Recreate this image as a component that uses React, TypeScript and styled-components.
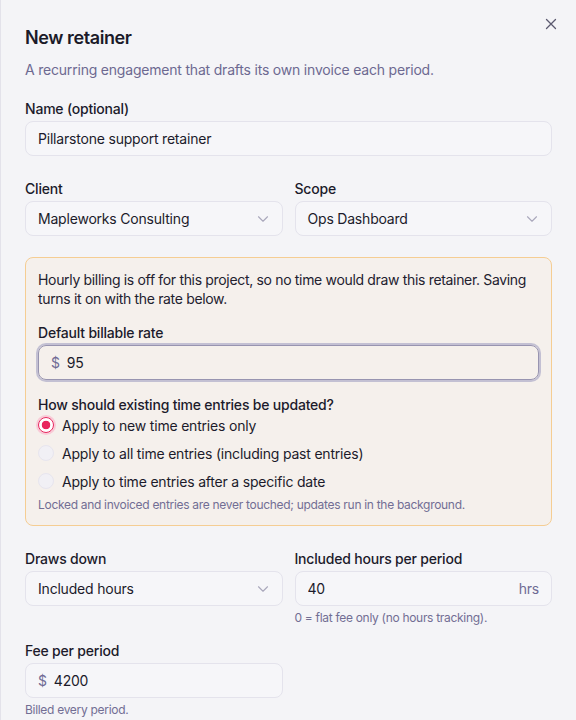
import React from "react";
import styled, { createGlobalStyle } from "styled-components";

const GlobalStyle = createGlobalStyle`
  * { box-sizing: border-box; }
  html, body {
    margin: 0;
    padding: 0;
    background: #f4f4f7;
    font-family: Inter, "Noto Sans", sans-serif;
    color: #1c1b2b;
    letter-spacing: -0.2px;
    -webkit-font-smoothing: antialiased;
  }
`;

const Dialog = styled.div`
  position: relative;
  width: 576px;
  min-height: 720px;
  padding: 24px;
  border-left: 1px solid #e3e2ea;
  background: #f4f4f7;
  overflow: hidden;
`;

const CloseButton = styled.button`
  position: absolute;
  top: 16px;
  right: 17px;
  width: 16px;
  height: 16px;
  padding: 0;
  border: 0;
  background: transparent;
  color: #5b596f;
  display: flex;
  align-items: center;
  justify-content: center;
  cursor: pointer;
`;

const Title = styled.h2`
  margin: 0;
  font-size: 18px;
  line-height: 28px;
  font-weight: 600;
  letter-spacing: -0.4px;
  color: #1b1a29;
`;

const Subtitle = styled.p`
  margin: 8px 0 0;
  font-size: 14px;
  line-height: 20px;
  color: #6d6991;
`;

const Form = styled.div`
  margin-top: 17px;
  display: flex;
  flex-direction: column;
  gap: 21px;
`;

const Grid = styled.div<{ $rowGap?: number }>`
  display: grid;
  grid-template-columns: 1fr 1fr;
  column-gap: 12px;
  row-gap: ${(p) => p.$rowGap ?? 0}px;
  align-items: start;
`;

const Field = styled.div`
  display: flex;
  flex-direction: column;
  min-width: 0;
`;

const Label = styled.label`
  font-size: 14px;
  line-height: 24px;
  font-weight: 500;
  color: #1c1b2b;
`;

const Control = styled.div<{ $focused?: boolean }>`
  height: 35px;
  display: flex;
  align-items: center;
  gap: 7px;
  padding: 0 12px;
  border-radius: 8px;
  border: 1px solid ${(p) => (p.$focused ? "#9894b0" : "#e4e3ec")};
  background: ${(p) => (p.$focused ? "transparent" : "#f6f6f9")};
  box-shadow: ${(p) => (p.$focused ? "0 0 0 2px #c3c0d3" : "none")};
  font-size: 14px;
  color: #1c1b2b;
`;

const TextInput = styled.input`
  flex: 1;
  min-width: 0;
  border: 0;
  outline: none;
  padding: 0;
  background: transparent;
  font: inherit;
  letter-spacing: inherit;
  color: inherit;
`;

const Affix = styled.span`
  color: #6f6b94;
  font-size: 14px;
  flex: none;
`;

const SelectBox = styled(Control).attrs({ as: "button" })`
  width: 100%;
  justify-content: space-between;
  padding-right: 10px;
  font-family: inherit;
  letter-spacing: inherit;
  text-align: left;
  cursor: pointer;
`;

const Chevron = styled.svg`
  width: 18px;
  height: 18px;
  flex: none;
  color: #aaa8bc;
`;

const Hint = styled.p`
  margin: 4px 0 0;
  font-size: 12px;
  line-height: 16px;
  letter-spacing: -0.3px;
  color: #726e94;
`;

const Notice = styled.section`
  padding: 12px;
  border: 1px solid #f5cd93;
  border-radius: 8px;
  background: #f5f0ec;
  display: flex;
  flex-direction: column;
`;

const NoticeText = styled.p`
  margin: 0;
  font-size: 14px;
  line-height: 19px;
  letter-spacing: -0.33px;
  color: #23212f;
`;

const NoticeField = styled(Field)`
  margin-top: 13px;
`;

const Question = styled.div`
  margin-top: 15px;
  font-size: 14px;
  line-height: 20px;
  font-weight: 500;
  color: #1c1b2b;
`;

const RadioList = styled.div`
  display: flex;
  flex-direction: column;
  gap: 8px;
`;

const RadioRow = styled.label`
  display: flex;
  align-items: center;
  gap: 8px;
  height: 20px;
  font-size: 14px;
  color: #1c1b2b;
  cursor: pointer;
`;

const RadioDot = styled.span<{ $checked?: boolean }>`
  width: 16px;
  height: 16px;
  border-radius: 50%;
  flex: none;
  border: 1px solid ${(p) => (p.$checked ? "#e8265e" : "#e7e5ee")};
  background: ${(p) =>
    p.$checked
      ? "radial-gradient(circle, #e8265e 0 4px, #ffffff 4.6px)"
      : "#f1f0f5"};
  box-shadow: ${(p) => (p.$checked ? "0 0 0 2px #f9c9d6" : "none")};
`;

const NoticeHint = styled(Hint)`
  margin-top: 6px;
`;

const ChevronDown = () => (
  <Chevron viewBox="0 0 24 24" fill="none" stroke="currentColor" strokeWidth={1.5} strokeLinecap="round" strokeLinejoin="round">
    <path d="m6 9 6 6 6-6" />
  </Chevron>
);

const Select = ({ value }: { value: string }) => (
  <SelectBox type="button">
    <span>{value}</span>
    <ChevronDown />
  </SelectBox>
);

const radios = [
  { label: "Apply to new time entries only", checked: true },
  { label: "Apply to all time entries (including past entries)", checked: false },
  { label: "Apply to time entries after a specific date", checked: false },
];

export default function App() {
  return (
    <>
      <GlobalStyle />
      <Dialog role="dialog" aria-labelledby="retainer-title">
        <CloseButton aria-label="Close">
          <svg width="12" height="12" viewBox="0 0 12 12" fill="none" stroke="currentColor" strokeWidth={1.3} strokeLinecap="round">
            <path d="M1.5 1.5l9 9M10.5 1.5l-9 9" />
          </svg>
        </CloseButton>

        <Title id="retainer-title">New retainer</Title>
        <Subtitle>A recurring engagement that drafts its own invoice each period.</Subtitle>

        <Form>
          <Field>
            <Label>Name (optional)</Label>
            <Control>
              <TextInput readOnly defaultValue="Pillarstone support retainer" />
            </Control>
          </Field>

          <Grid>
            <Field>
              <Label>Client</Label>
              <Select value="Mapleworks Consulting" />
            </Field>
            <Field>
              <Label>Scope</Label>
              <Select value="Ops Dashboard" />
            </Field>
          </Grid>

          <Notice>
            <NoticeText>
              Hourly billing is off for this project, so no time would draw this retainer. Saving turns it on with the rate below.
            </NoticeText>
            <NoticeField>
              <Label>Default billable rate</Label>
              <Control $focused>
                <Affix>$</Affix>
                <TextInput readOnly defaultValue="95" />
              </Control>
            </NoticeField>
            <Question>How should existing time entries be updated?</Question>
            <RadioList role="radiogroup">
              {radios.map((r) => (
                <RadioRow key={r.label}>
                  <RadioDot $checked={r.checked} />
                  {r.label}
                </RadioRow>
              ))}
            </RadioList>
            <NoticeHint>Locked and invoiced entries are never touched; updates run in the background.</NoticeHint>
          </Notice>

          <Grid $rowGap={13}>
            <Field>
              <Label>Draws down</Label>
              <Select value="Included hours" />
            </Field>
            <Field>
              <Label>Included hours per period</Label>
              <Control>
                <TextInput readOnly defaultValue="40" />
                <Affix>hrs</Affix>
              </Control>
              <Hint>0 = flat fee only (no hours tracking).</Hint>
            </Field>
            <Field>
              <Label>Fee per period</Label>
              <Control>
                <Affix>$</Affix>
                <TextInput readOnly defaultValue="4200" />
              </Control>
              <Hint>Billed every period.</Hint>
            </Field>
          </Grid>
        </Form>
      </Dialog>
    </>
  );
}
